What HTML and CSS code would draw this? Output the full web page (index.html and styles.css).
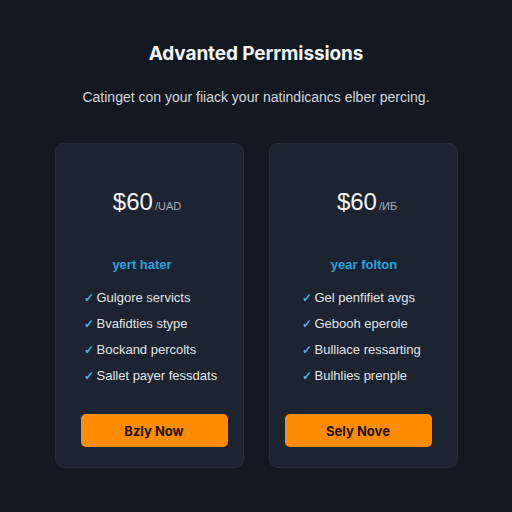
FILE: index.html
```html
<!DOCTYPE html>
<html>
<head>
<meta charset="utf-8">
<link rel="stylesheet" href="styles.css">
</head>
<body>
<main class="page">
  <h1 class="title">Advanted Perrmissions</h1>
  <p class="subtitle">Catinget con your fiiack your natindicancs elber percing.</p>
  <section class="plans">
    <div class="card card-left">
      <div class="price"><span class="amount">$60</span><span class="unit">/UAD</span></div>
      <div class="plan-name">yert hater</div>
      <ul class="features">
        <li><span class="check">✓</span>Gulgore servicts</li>
        <li><span class="check">✓</span>Bvafidties stype</li>
        <li><span class="check">✓</span>Bockand percolts</li>
        <li><span class="check">✓</span>Sallet payer fessdats</li>
      </ul>
      <button class="buy">Bzly Now</button>
    </div>
    <div class="card card-right">
      <div class="price"><span class="amount">$60</span><span class="unit">/ИБ</span></div>
      <div class="plan-name">year folton</div>
      <ul class="features">
        <li><span class="check">✓</span>Gel penfifiet avgs</li>
        <li><span class="check">✓</span>Gebooh eperole</li>
        <li><span class="check">✓</span>Bulliace ressarting</li>
        <li><span class="check">✓</span>Bulhlies prenple</li>
      </ul>
      <button class="buy">Sely Nove</button>
    </div>
  </section>
</main>
</body>
</html>
```
FILE: styles.css
```css
html, body {
  margin: 0;
  padding: 0;
  background: #121922;
}
body {
  width: 512px;
  height: 512px;
  font-family: "Liberation Sans", Arial, sans-serif;
  color: #e8ebef;
}
.page {
  display: flex;
  flex-direction: column;
  align-items: center;
  padding-top: 42px;
}
.title {
  margin: 0;
  font-family: Inter, "Liberation Sans", sans-serif;
  font-size: 19px;
  font-weight: 700;
  line-height: 24px;
  color: #f4f5f7;
  letter-spacing: -0.1px;
}
.subtitle {
  margin: 21px 0 0;
  font-size: 14px;
  line-height: 20px;
  color: #d3d7dd;
}
.plans {
  display: flex;
  gap: 25px;
  margin-top: 36px;
}
.card {
  width: 189px;
  height: 325px;
  box-sizing: border-box;
  background: #1b2430;
  border: 1px solid #252e3a;
  border-radius: 9px;
  display: flex;
  flex-direction: column;
  align-items: center;
  padding-top: 45px;
}
.price {
  display: flex;
  align-items: baseline;
  height: 26px;
}
.amount {
  font-size: 24px;
  line-height: 26px;
  color: #f2f4f6;
}
.unit {
  font-size: 11px;
  color: #a8afb8;
  margin-left: 2px;
}
.card-left .price { margin-right: 4px; }
.card-right .price { margin-left: 8px; }
.plan-name {
  margin-top: 42px;
  font-size: 13px;
  font-weight: 700;
  line-height: 16px;
  color: #2aa3df;
}
.card-left .plan-name { margin-right: 14px; }
.card-right .plan-name { margin-left: 2px; }
.features {
  list-style: none;
  margin: 17px 0 0;
  padding: 0;
  align-self: stretch;
  display: flex;
  flex-direction: column;
  gap: 10px;
}
.card-left .features { padding-left: 28px; }
.card-right .features { padding-left: 32px; }
.features li {
  font-size: 13px;
  line-height: 16px;
  color: #e1e4e8;
  display: flex;
  align-items: center;
}
.check {
  color: #4fb3e6;
  font-size: 12px;
  font-weight: 700;
  width: 12px;
  margin-right: 1px;
}
.buy {
  margin-top: auto;
  margin-bottom: 20px;
  width: 147px;
  height: 33px;
  border: none;
  border-radius: 5px;
  background: #ff8c00;
  color: #1a1208;
  font-family: Inter, "Liberation Sans", sans-serif;
  font-size: 13px;
  font-weight: 700;
}
.card-left .buy { margin-left: 10px; }
.card-right .buy { margin-right: 10px; }
```
